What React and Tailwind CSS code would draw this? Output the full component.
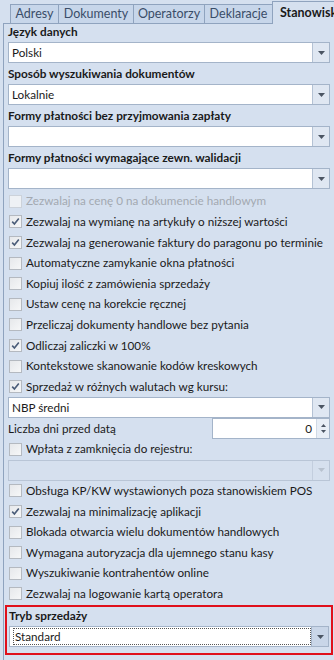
import React from "react";

const FONT = { fontFamily: 'Lato, "Noto Sans", sans-serif' };

function Arrow({ disabled }) {
  return (
    <svg width="7" height="4" viewBox="0 0 7 4">
      <path d="M0 0 L7 0 L3.5 4 Z" fill={disabled ? "#b8c2cf" : "#4b5563"} />
    </svg>
  );
}

function Dropdown({ value, disabled, focused }) {
  return (
    <div className={`flex h-[21px] border ${disabled ? "border-[#b9c5d6] bg-[#d6e0ee]" : "border-[#a4b4c9] bg-white"}`}>
      <div className="flex-1 flex items-center pl-[3px] min-w-0">
        {focused ? (
          <div className="flex-1 h-[17px] border border-dotted border-[#555] flex items-center pl-[1px] text-[11.7px] text-[#1a1a1a] leading-none whitespace-nowrap">
            {value}
          </div>
        ) : (
          <span className="text-[11.7px] text-[#1a1a1a] leading-none whitespace-nowrap">{value}</span>
        )}
      </div>
      <div className={`w-[17px] flex items-center justify-center border-l ${disabled ? "border-[#c3cede] bg-[#d6e0ee]" : focused ? "border-[#a4b4c9] bg-[#c9d6e8]" : "border-[#b4c2d4] bg-[#dfe7f2]"}`}>
        <Arrow disabled={disabled} />
      </div>
    </div>
  );
}

function Label({ children }) {
  return <div className="h-[16px] flex items-center text-[11.8px] font-bold text-[#1a1a1a] leading-none mb-[2px] whitespace-nowrap">{children}</div>;
}

function Check({ label, checked, disabled }) {
  return (
    <div className="h-[20.6px] flex items-center pl-[1px]">
      <div className={`w-[13px] h-[13px] shrink-0 border flex items-center justify-center ${disabled ? "border-[#ccd2da] bg-[#eef1f5]" : "border-[#b4b9c0] bg-gradient-to-br from-[#e6e8eb] to-[#f6f7f8]"}`}>
        {checked && (
          <svg width="9" height="9" viewBox="0 0 9 9">
            <path d="M1.2 4.6 L3.4 7 L7.8 1.4" stroke="#4a5c78" strokeWidth="1.6" fill="none" />
          </svg>
        )}
      </div>
      <span className={`ml-[4px] text-[11.7px] leading-none whitespace-nowrap ${disabled ? "text-[#a3a9b1]" : "text-[#1a1a1a]"}`}>{label}</span>
    </div>
  );
}

function Tab({ label, w, first }) {
  return (
    <div
      className={`h-[20px] shrink-0 border border-[#8fa3be] bg-[#c7d6ea] flex items-center justify-center text-[12.5px] text-[#3a4d68] leading-none whitespace-nowrap ${first ? "" : "-ml-px"}`}
      style={{ width: w }}
    >
      {label}
    </div>
  );
}

export default function App() {
  return (
    <div className="w-[334px] h-[660px] bg-[#d5e0ef] overflow-hidden relative" style={FONT}>
      <div className="pl-[3px]">
        <div className="h-[24px] flex items-end">
          <div className="w-[7px] h-px bg-[#8fa3be] shrink-0" />
          <Tab label="Adresy" w={49} first />
          <Tab label="Dokumenty" w={76} />
          <Tab label="Operatorzy" w={72} />
          <Tab label="Deklaracje" w={69} />
          <div className="-ml-px h-[23px] w-[70px] shrink-0 border-t border-l border-[#8fa3be] bg-[#d5e0ef] flex items-center pl-[7px] text-[12.5px] font-bold text-[#1a1a1a] leading-none whitespace-nowrap overflow-hidden">
            Stanowisk
          </div>
        </div>
        <div className="h-[636px] border-l border-[#8fa3be] pl-[4px] pr-[4px] flex flex-col">
          <div className="mb-[3px]">
            <Label>Język danych</Label>
            <Dropdown value="Polski" />
          </div>
          <div className="mb-[3px]">
            <Label>Sposób wyszukiwania dokumentów</Label>
            <Dropdown value="Lokalnie" />
          </div>
          <div className="mb-[3px]">
            <Label>Formy płatności bez przyjmowania zapłaty</Label>
            <Dropdown value="" />
          </div>
          <div>
            <Label>Formy płatności wymagające zewn. walidacji</Label>
            <Dropdown value="" />
          </div>
          <div className="mt-[2px]">
            <Check label="Zezwalaj na cenę 0 na dokumencie handlowym" disabled />
            <Check label="Zezwalaj na wymianę na artykuły o niższej wartości" checked />
            <Check label="Zezwalaj na generowanie faktury do paragonu po terminie" checked />
            <Check label="Automatyczne zamykanie okna płatności" />
            <Check label="Kopiuj ilość z zamówienia sprzedaży" />
            <Check label="Ustaw cenę na korekcie ręcznej" />
            <Check label="Przeliczaj dokumenty handlowe bez pytania" />
            <Check label="Odliczaj zaliczki w 100%" checked />
            <Check label="Kontekstowe skanowanie kodów kreskowych" />
            <Check label="Sprzedaż w różnych walutach wg kursu:" checked />
          </div>
          <Dropdown value="NBP średni" />
          <div className="h-[21px] flex items-center">
            <span className="flex-1 text-[11.7px] text-[#1a1a1a] leading-none whitespace-nowrap">Liczba dni przed datą</span>
            <div className="w-[118px] h-[21px] flex border border-[#a4b4c9] bg-white">
              <div className="flex-1 flex items-center justify-end pr-[4px] text-[11.7px] text-[#1a1a1a] leading-none">0</div>
              <div className="w-[13px] flex flex-col items-center justify-center gap-[3px] bg-[#e8eef6] border-l border-[#d0d9e5]">
                <svg width="5" height="3" viewBox="0 0 5 3"><path d="M0 3 L5 3 L2.5 0 Z" fill="#4b5563" /></svg>
                <svg width="5" height="3" viewBox="0 0 5 3"><path d="M0 0 L5 0 L2.5 3 Z" fill="#4b5563" /></svg>
              </div>
            </div>
          </div>
          <Check label="Wpłata z zamknięcia do rejestru:" />
          <Dropdown value="" disabled />
          <div>
            <Check label="Obsługa KP/KW wystawionych poza stanowiskiem POS" />
            <Check label="Zezwalaj na minimalizację aplikacji" checked />
            <Check label="Blokada otwarcia wielu dokumentów handlowych" />
            <Check label="Wymagana autoryzacja dla ujemnego stanu kasy" />
            <Check label="Wyszukiwanie kontrahentów online" />
            <Check label="Zezwalaj na logowanie kartą operatora" />
          </div>
          <div className="-ml-[3px] -mr-[3px] mt-[1px] h-[50px] border-2 border-[#e0101b] px-[2px] pt-[1px]">
            <Label>Tryb sprzedaży</Label>
            <Dropdown value="Standard" focused />
          </div>
        </div>
      </div>
    </div>
  );
}
